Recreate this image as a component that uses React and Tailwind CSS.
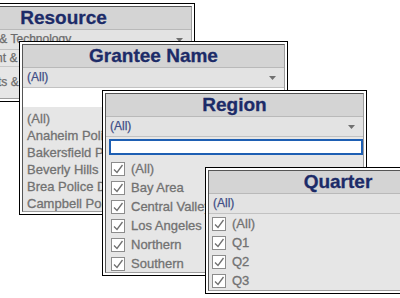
import React from "react";

const Arrow = () => (
  <svg width="7" height="4" viewBox="0 0 7 4" className="shrink-0">
    <path d="M0 0H7L3.5 4Z" fill="#707070" />
  </svg>
);

const Check = () => (
  <span className="w-[14px] h-[14px] shrink-0 border border-[#8c8c8c] bg-white flex items-center justify-center">
    <svg width="12" height="12" viewBox="0 0 12 12">
      <path d="M2 6.5 L5 9.5 L10.5 2" fill="none" stroke="#707070" strokeWidth="1.3" />
    </svg>
  </span>
);

function Win({ cls, title, children }) {
  return (
    <div className={`absolute border border-black bg-white p-[2px] ${cls}`}>
      <div className="h-full flex flex-col border border-[#555555] border-r-[#9c9c9c] border-b-[#9c9c9c] bg-[#e6e6e6] overflow-hidden">
        <div className="h-[23px] shrink-0 border-b border-[#b9b9b9] bg-[#d4d4d4] text-center text-[19px] font-bold leading-[22px] text-[#1c2b68] whitespace-nowrap [-webkit-text-stroke:0.3px_#1c2b68]">
          {title}
        </div>
        {children}
      </div>
    </div>
  );
}

function Drop({ text }) {
  return (
    <div className="h-[20px] shrink-0 border-b border-[#c2c2c2] bg-[#e3e3e3] flex items-center justify-between pl-[4px] pr-[8px] text-[12px] leading-[19px] whitespace-nowrap">
      <span className="text-[#404d86] [-webkit-text-stroke:0.25px_#404d86]">{text}</span>
      <Arrow />
    </div>
  );
}

function CheckRow({ label }) {
  return (
    <div className="h-[19px] flex items-center gap-[6px] text-[13px] text-[#727272] whitespace-nowrap [-webkit-text-stroke:0.3px_#727272]">
      <Check />
      <span>{label}</span>
    </div>
  );
}

export default function App() {
  return (
    <div className="relative w-[400px] h-[298px] overflow-hidden bg-white font-['Liberation_Sans',Arial,sans-serif]">
      <Win cls="left-[-68px] top-[3px] w-[263px] h-[99px]" title="Resource">
        <div className="h-[20px] shrink-0 border-b border-[#c2c2c2] bg-[#e3e3e3] flex items-center justify-between pl-0 pr-[8px] text-[12px] leading-[19px] whitespace-nowrap">
          <span className="text-[#6c6c6c] [-webkit-text-stroke:0.25px_#6c6c6c]">Information &amp; Technology</span>
          <Arrow />
        </div>
        <div className="h-[17px] shrink-0 border-b border-[#c8c8c8] text-[12px] leading-[16px] text-[#6c6c6c] whitespace-nowrap [-webkit-text-stroke:0.25px_#6c6c6c]">
          Management &amp; Administration
        </div>
        <div className="pt-[7px] text-[12px] leading-[16px] text-[#6c6c6c] whitespace-nowrap [-webkit-text-stroke:0.25px_#6c6c6c]">
          Assessments &amp; Evaluation
        </div>
      </Win>

      <Win cls="left-[19px] top-[41px] w-[269px] h-[174px]" title="Grantee Name">
        <Drop text="(All)" />
        <div className="h-[19px] shrink-0 bg-white" />
        <div className="pt-[3px] pl-[4px] text-[13px] leading-[17px] text-[#727272] whitespace-nowrap [-webkit-text-stroke:0.3px_#727272]">
          <div>(All)</div>
          <div>Anaheim Police Department</div>
          <div>Bakersfield Police Department</div>
          <div>Beverly Hills Police Department</div>
          <div>Brea Police Department</div>
          <div>Campbell Police Department</div>
        </div>
      </Win>

      <Win cls="left-[102px] top-[90px] w-[265px] h-[186px]" title="Region">
        <Drop text="(All)" />
        <div className="mt-[2px] ml-[3px] h-[16px] shrink-0 border-2 border-[#1e5fb3] bg-white" />
        <div className="pt-[4px] pl-[5px]">
          <CheckRow label="(All)" />
          <CheckRow label="Bay Area" />
          <CheckRow label="Central Valley" />
          <CheckRow label="Los Angeles" />
          <CheckRow label="Northern" />
          <CheckRow label="Southern" />
        </div>
      </Win>

      <Win cls="left-[205px] top-[167px] w-[266px] h-[127px]" title="Quarter">
        <Drop text="(All)" />
        <div className="pl-[3px]">
          <CheckRow label="(All)" />
          <CheckRow label="Q1" />
          <CheckRow label="Q2" />
          <CheckRow label="Q3" />
        </div>
      </Win>
    </div>
  );
}
